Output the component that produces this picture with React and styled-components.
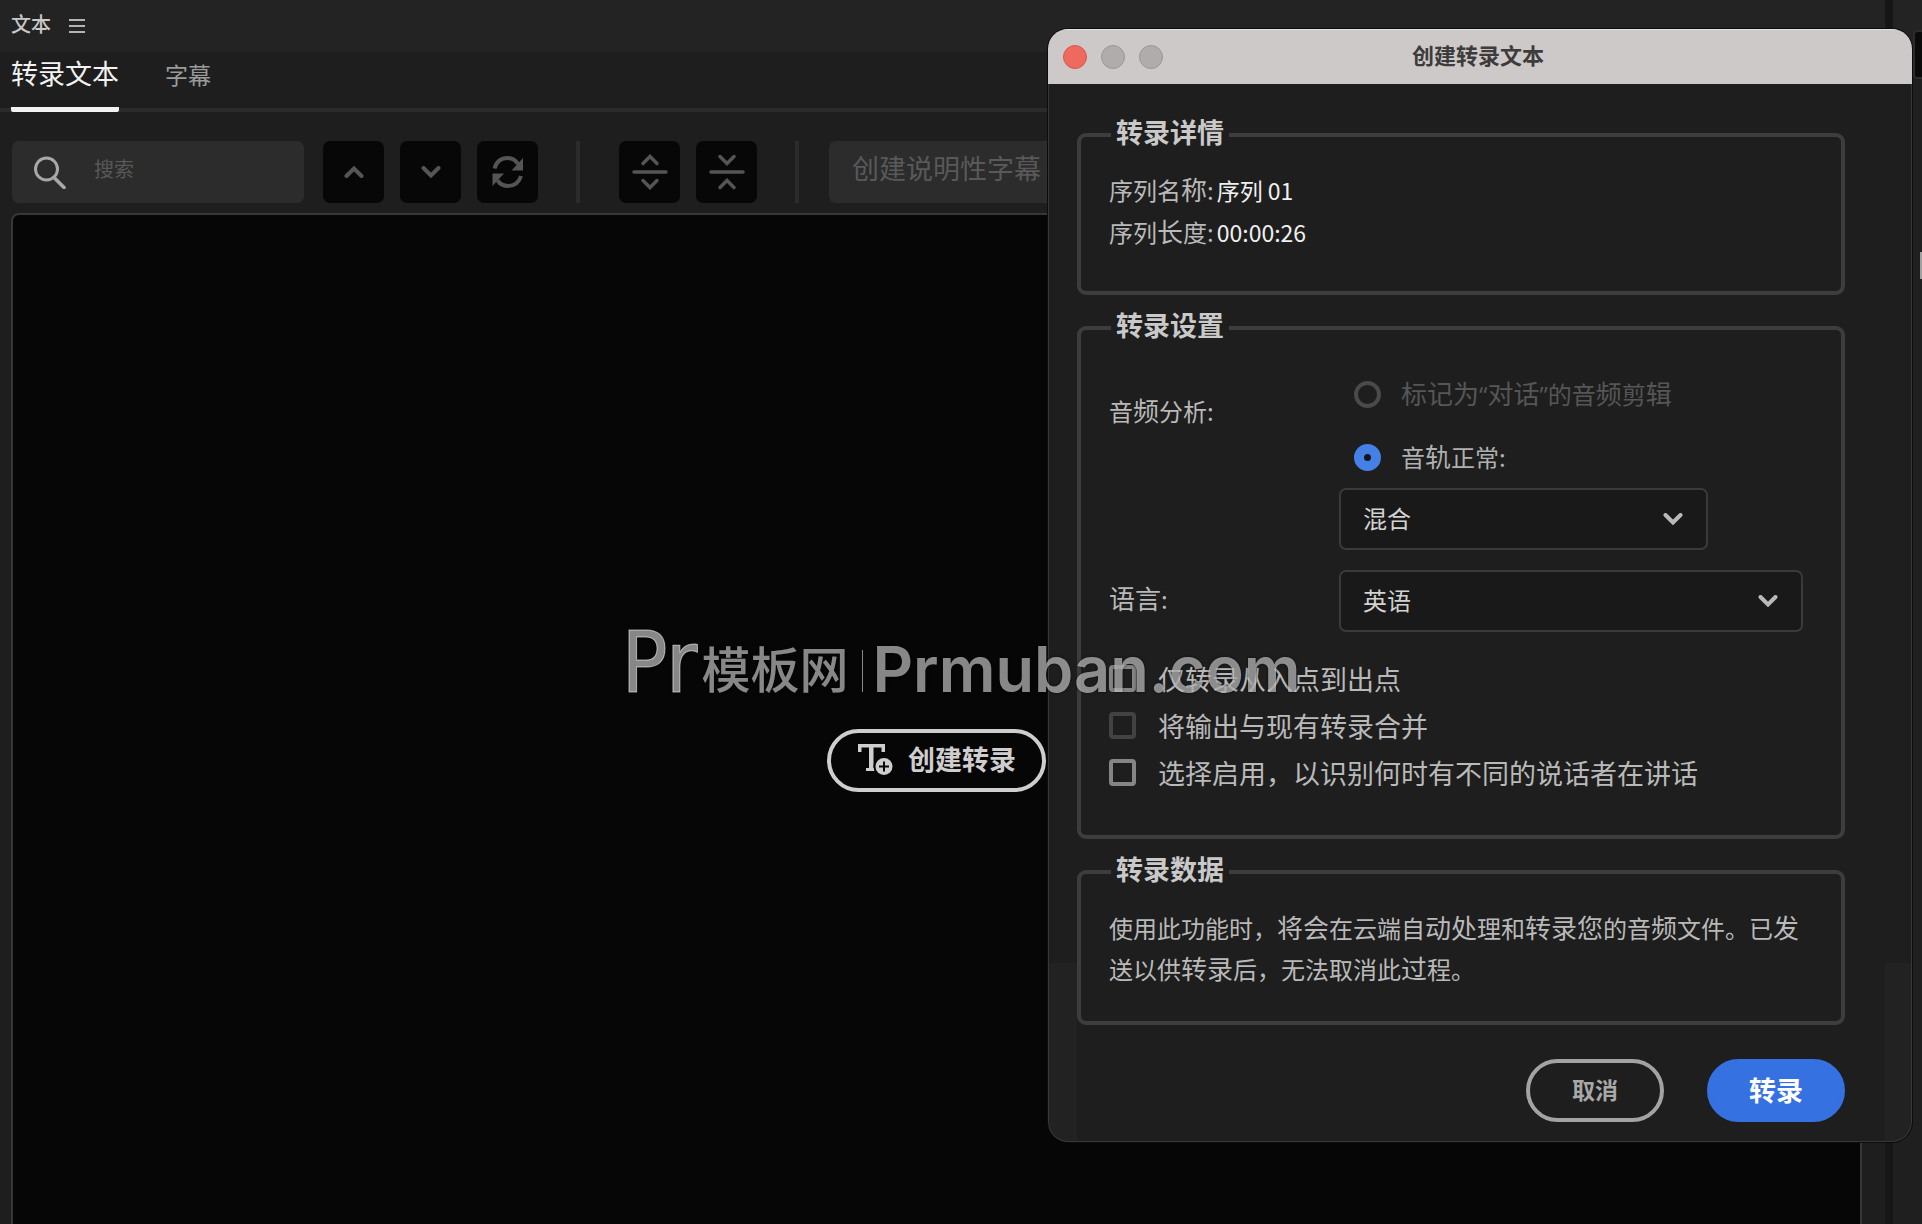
import React from 'react';
import styled, { createGlobalStyle } from 'styled-components';

const GlobalStyle = createGlobalStyle`
  * {
    box-sizing: border-box;
  }

  body {
    margin: 0;
    background: #1e1e1e;
    overflow: hidden;
    font-family: "Noto Sans CJK SC", sans-serif;
  }

  button, input, select {
    font-family: inherit;
    margin: 0;
  }
`;

const Workspace = styled.div`
  position: relative;
  min-height: 100vh;
  display: grid;
  grid-template-columns: 1fr 8px 29px;
`;

const TextPanel = styled.main`
  display: flex;
  flex-direction: column;
`;

const PanelHeader = styled.header`
  display: flex;
  align-items: center;
  gap: 18px;
  height: 52px;
  padding: 0 11px 4px;
  background: #232323;
`;

const PanelTitle = styled.h1`
  margin: 0;
  font-size: 20px;
  font-weight: 500;
  line-height: 28px;
  color: #c8c8c8;
`;

const MenuButton = styled.button`
  display: flex;
  padding: 4px 0 0;
  border: 0;
  background: none;
  color: #b4b4b4;
`;

const Tabs = styled.nav`
  display: flex;
  gap: 46px;
  height: 60px;
  padding: 0 11px;
  box-shadow: inset 0 -4px #2b2b2b;
`;

const Tab = styled.button`
  padding: 0 0 ${p => (p.$active ? 14 : 12)}px;
  border: 0;
  border-bottom: 5px solid ${p => (p.$active ? '#f2f2f2' : 'transparent')};
  border-radius: 2px;
  background: none;
  font-size: ${p => (p.$active ? 27 : 23)}px;
  line-height: 40px;
  color: ${p => (p.$active ? '#f2f2f2' : '#9a9a9a')};
`;

const Toolbar = styled.div`
  display: flex;
  height: 101px;
  padding: 29px 0 10px 12px;
  overflow: hidden;
`;

const SearchBox = styled.label`
  display: flex;
  align-items: center;
  gap: 28px;
  width: 292px;
  height: 62px;
  margin-right: 19px;
  padding: 0 22px;
  border-radius: 7px;
  background: #2c2c2c;
  color: #a8a8a8;
`;

const SearchInput = styled.input`
  flex: 1;
  min-width: 0;
  padding: 0 0 8px;
  border: 0;
  outline: 0;
  background: none;
  font-size: 20px;
  color: #ccc;

  &::placeholder {
    color: #585858;
    opacity: 1;
  }
`;

const ToolGroup = styled.div`
  display: flex;
  gap: 16px;
`;

const ToolButton = styled.button`
  display: flex;
  align-items: center;
  justify-content: center;
  width: 61px;
  height: 62px;
  padding: 0;
  border: 0;
  border-radius: 7px;
  background: #070707;
  color: #555;
`;

const Divider = styled.span`
  width: 4px;
  height: 62px;
  margin: 0 ${p => p.$after}px 0 38px;
  background: #2b2b2b;
`;

const CaptionButton = styled.button`
  height: 62px;
  padding: 0 23px 9px;
  border: 0;
  border-radius: 7px;
  background: #2c2c2c;
  font-size: 27px;
  color: #595959;
`;

const Canvas = styled.section`
  flex: 1;
  display: flex;
  align-items: center;
  justify-content: center;
  margin: 0 23px 0 11px;
  padding-top: 81px;
  border: 2px solid #373737;
  border-bottom: 0;
  border-radius: 8px 0 0 0;
  background: #060606;
`;

const PillButton = styled.button`
  display: flex;
  align-items: center;
  justify-content: center;
  gap: 15px;
  min-width: ${p => p.$width}px;
  height: 63px;
  padding: 0 0 3px;
  border: 4px solid ${p => p.$border};
  border-radius: 32px;
  background: ${p => p.$fill || 'transparent'};
  font-size: ${p => p.$size || 27}px;
  font-weight: 700;
  color: ${p => p.$color};
`;

const Gutter = styled.div`
  background: #161616;
`;

const SidePanel = styled.aside`
  padding-top: 30px;
  background: linear-gradient(#232323 52px, #1f1f1f 52px);
`;

const SideTab = styled.div`
  height: 49px;
  margin-left: 20px;
  border: 2px solid #2b2b2b;
  border-right: 0;
  border-radius: 4px 0 0 4px;
  background: #0a0a0a;
`;

const SideHandle = styled.div`
  width: 2px;
  height: 27px;
  margin: 173px 0 0 auto;
  background: #a0a0a0;
`;

const Dialog = styled.div`
  position: absolute;
  top: 29px;
  right: 10px;
  width: 864px;
  border-radius: 20px;
  overflow: hidden;
  background: #1e1e1e;
  box-shadow: 0 0 0 1px #0c0c0c;
`;

const TitleBar = styled.header`
  display: grid;
  grid-template-columns: 1fr auto 1fr;
  align-items: center;
  height: 55px;
  padding: 0 15px;
  border-top: 1px solid #e4e1e1;
  background: #cdc9c9;
`;

const Lights = styled.div`
  display: flex;
  gap: 14px;
`;

const Light = styled.button`
  width: 24px;
  height: 24px;
  padding: 0;
  border: 1px solid ${p => (p.$close ? '#d9584b' : '#9b9797')};
  border-radius: 50%;
  background: ${p => (p.$close ? '#ee6a5e' : '#b0acac')};
`;

const DialogTitle = styled.h2`
  margin: 0;
  padding: 0 4px 6px 0;
  font-size: 22px;
  font-weight: 700;
  line-height: 32px;
  color: #3d3b3b;
`;

const DialogBody = styled.form`
  display: flex;
  flex-direction: column;
  gap: 15px;
  padding: 33px 66px 19px 28px;
  border: 1px solid #383838;
  border-top: 0;
  border-radius: 0 0 20px 20px;
  background:
    linear-gradient(#222, #222) 0 100% / 28px 178px no-repeat,
    linear-gradient(#222, #222) 100% 100% / 26px 178px no-repeat,
    #1e1e1e;
`;

const Group = styled.fieldset`
  min-width: 0;
  margin: 0;
  padding: ${p => p.$top}px 38px ${p => p.$bottom}px 28px;
  border: 4px solid #3d3d3d;
  border-radius: 9px;
  font-size: 24px;
  line-height: 42px;
  color: #b9b9b9;
`;

const Legend = styled.legend`
  margin-left: 2px;
  padding: 0 5px 6px;
  font-size: 27px;
  font-weight: 700;
  line-height: 30px;
  color: #c9c9c9;
`;

const Large = styled.span`
  font-size: 26px;
  line-height: 1;
`;

const Quote = styled.span`
  font-family: "Open Sans", sans-serif;
  line-height: 1;
`;

const Details = styled.dl`
  display: grid;
  grid-template-columns: auto 1fr;
  column-gap: 3px;
  margin: 0;
`;

const Term = styled.dt`
  height: 42px;
`;

const Value = styled.dd`
  height: 42px;
  margin: 0;
  font-size: 23px;
  color: #f0f0f0;
`;

const Settings = styled.div`
  display: grid;
  grid-template-columns: 230px 1fr;
  row-gap: 20px;
`;

const SettingName = styled.div`
  height: 42px;
  margin-top: ${p => p.$top}px;
`;

const AudioOptions = styled.div`
  display: flex;
  flex-direction: column;
  gap: 21px;
  margin-bottom: 10px;
  padding-left: 15px;
`;

const OptionLabel = styled.label`
  display: flex;
  align-items: center;
  gap: 20px;
  height: 42px;
  color: ${p => (p.$dim ? '#565656' : '#b0b0b0')};
`;

const Radio = styled.input`
  appearance: none;
  width: 27px;
  height: 27px;
  border: 4px solid #4a4a4a;
  border-radius: 50%;

  &:checked {
    border: 10px solid #4480e6;
    background: #15161a;
  }
`;

const SelectWrap = styled.div`
  display: grid;
  align-items: center;
  width: ${p => p.$width};
  color: #b9b9b9;

  > * {
    grid-area: 1 / 1;
  }

  > svg {
    justify-self: end;
    margin-right: 25px;
    pointer-events: none;
  }
`;

const Select = styled.select`
  appearance: none;
  width: 100%;
  height: 62px;
  padding: 0 60px 3px 22px;
  border: 2px solid #3a3a3a;
  border-radius: 7px;
  background: #191919;
  font-size: 24px;
  color: #d2d2d2;
`;

const CheckList = styled.div`
  display: flex;
  flex-direction: column;
  margin-top: 23px;
`;

const CheckLabel = styled.label`
  display: flex;
  align-items: center;
  gap: 22px;
  height: 47px;
  font-size: 27px;
`;

const Checkbox = styled.input`
  appearance: none;
  width: 27px;
  height: 27px;
  border: 4px solid #858585;
  border-radius: 4px;

  &:disabled {
    border-color: #424242;
  }
`;

const Note = styled.p`
  margin: 0;
  line-height: 41px;
`;

const Actions = styled.div`
  display: flex;
  justify-content: flex-end;
  gap: 43px;
  margin-top: 19px;
`;

const Watermark = styled.div`
  position: absolute;
  top: 613px;
  left: 0;
  right: 0;
  text-align: center;
  line-height: 100px;
  white-space: nowrap;
  color: rgba(255, 255, 255, 0.53);
  text-shadow: 0 0 3px rgba(0, 0, 0, 0.6);
  pointer-events: none;
`;

const MarkLogo = styled.span`
  font-family: "Liberation Sans Narrow", "DejaVu Sans Condensed", sans-serif;
  font-size: 85px;
  font-weight: 400;
  -webkit-text-stroke: 1px rgba(255, 255, 255, 0.53);
`;

const MarkName = styled.span`
  margin-left: 4px;
  font-size: 49px;
  font-weight: 500;
  vertical-align: 4px;
`;

const MarkRule = styled.span`
  display: inline-block;
  width: 1px;
  height: 42px;
  margin: 0 9px 0 14px;
  background: rgba(255, 255, 255, 0.53);
`;

const MarkSite = styled.span`
  font-family: Inter, sans-serif;
  font-size: 63px;
  font-weight: 600;
`;

const Chevron = ({ up, size = 20, width = 4 }) => (
  <svg width={size} height={size * 0.6} viewBox="0 0 20 12" fill="none" stroke="currentColor" strokeWidth={width} strokeLinecap="round">
    <path d={up ? 'M2.5 10 10 2.5 17.5 10' : 'M2.5 2 10 9.5 17.5 2'} />
  </svg>
);

const MenuIcon = () => (
  <svg width="16" height="14" viewBox="0 0 16 14" fill="currentColor">
    <path d="M0 0h16v2H0zM0 6h16v2H0zM0 12h16v2H0z" />
  </svg>
);

const SearchIcon = () => (
  <svg width="32" height="33" viewBox="0 0 32 33" fill="none" stroke="currentColor" strokeWidth="3">
    <circle cx="12.5" cy="13" r="11" />
    <path d="M20 21.5 30 31.5" strokeWidth="3.6" strokeLinecap="round" />
  </svg>
);

const RefreshIcon = () => (
  <svg width="32" height="34" viewBox="0 0 32 34" fill="none" stroke="currentColor" strokeWidth="4">
    <path d="M2.5 13.5C4.5 6.5 9.5 3 15.5 3c4.5 0 8 2 10.5 6" />
    <path d="M31 3v12.5H19.5z" fill="currentColor" stroke="none" />
    <path d="M29 21c-2 6.5-7 10-13 10-4.5 0-8-2-10.5-5.5" />
    <path d="M.5 31V18.5H12z" fill="currentColor" stroke="none" />
  </svg>
);

const ExpandIcon = () => (
  <svg width="36" height="36" viewBox="0 0 36 36" fill="none" stroke="currentColor" strokeWidth="3.5" strokeLinecap="round">
    <path d="M11 9.5 18 2.5 25 9.5M2 18h32M11 26.5 18 33.5 25 26.5" />
  </svg>
);

const CollapseIcon = () => (
  <svg width="36" height="36" viewBox="0 0 36 36" fill="none" stroke="currentColor" strokeWidth="3.5" strokeLinecap="round">
    <path d="M11 2.5 18 9.5 25 2.5M2 18h32M11 33.5 18 26.5 25 33.5" />
  </svg>
);

const TextAddIcon = () => (
  <svg width="36" height="35" viewBox="0 0 36 35" fill="none">
    <path d="M1 3h27v8h-3.5V6.5h-8V27H19v3H9v-3h3V6.5H4.5V11H1z" fill="currentColor" />
    <circle cx="27" cy="25.5" r="10.5" fill="#060606" />
    <circle cx="27" cy="25.5" r="8.5" fill="currentColor" />
    <path d="M27 20.5v10M22 25.5h10" stroke="#060606" strokeWidth="2" />
  </svg>
);

// these characters are set larger than the rest of the running text
const LARGE = /([称长频标记为对话辑轨语言将会动处转录您发过]+)/;

const Mixed = ({ children }) =>
  children.split(LARGE).map((part, i) => (i % 2 ? <Large key={i}>{part}</Large> : part));

const checks = [
  { id: 'inout', text: '仅转录从入点到出点' },
  { id: 'merge', text: '将输出与现有转录合并', disabled: true },
  { id: 'speakers', text: '选择启用，以识别何时有不同的说话者在讲话' },
];

const TranscribeDialog = () => (
  <Dialog role="dialog" aria-labelledby="dialog-title">
    <TitleBar>
      <Lights>
        <Light $close aria-label="关闭" />
        <Light aria-label="最小化" />
        <Light aria-label="缩放" />
      </Lights>
      <DialogTitle id="dialog-title">创建转录文本</DialogTitle>
    </TitleBar>
    <DialogBody onSubmit={e => e.preventDefault()}>
      <Group $top={16} $bottom={38}>
        <Legend>转录详情</Legend>
        <Details>
          <Term><Mixed>序列名称:</Mixed></Term>
          <Value>序列 01</Value>
          <Term><Mixed>序列长度:</Mixed></Term>
          <Value>00:00:26</Value>
        </Details>
      </Group>

      <Group $top={27} $bottom={39}>
        <Legend>转录设置</Legend>
        <Settings>
          <SettingName $top={17}><Mixed>音频分析:</Mixed></SettingName>
          <div>
            <AudioOptions>
              <OptionLabel $dim>
                <Radio type="radio" name="audio" disabled />
                <span>
                  <Mixed>标记为</Mixed>
                  <Quote>“</Quote>
                  <Mixed>对话</Mixed>
                  <Quote>”</Quote>
                  <Mixed>的音频剪辑</Mixed>
                </span>
              </OptionLabel>
              <OptionLabel>
                <Radio type="radio" name="audio" defaultChecked />
                <span><Mixed>音轨正常:</Mixed></span>
              </OptionLabel>
            </AudioOptions>
            <SelectWrap $width="369px">
              <Select aria-label="音轨正常">
                <option>混合</option>
              </Select>
              <Chevron />
            </SelectWrap>
          </div>
          <SettingName $top={8}>
            <label htmlFor="language"><Mixed>语言:</Mixed></label>
          </SettingName>
          <SelectWrap $width="100%">
            <Select id="language">
              <option>英语</option>
            </Select>
            <Chevron />
          </SelectWrap>
        </Settings>
        <CheckList>
          {checks.map(c => (
            <CheckLabel key={c.id}>
              <Checkbox type="checkbox" name={c.id} disabled={c.disabled} />
              {c.text}
            </CheckLabel>
          ))}
        </CheckList>
      </Group>

      <Group $top={17} $bottom={32}>
        <Legend>转录数据</Legend>
        <Note>
          <Mixed>使用此功能时，将会在云端自动处理和转录您的音频文件。已发送以供转录后，无法取消此过程。</Mixed>
        </Note>
      </Group>

      <Actions>
        <PillButton type="button" $width={138} $size={23} $border="#a3a3a3" $color="#a8a8a8">取消</PillButton>
        <PillButton type="submit" $width={138} $border="#3571e0" $fill="#3571e0" $color="#fff">转录</PillButton>
      </Actions>
    </DialogBody>
  </Dialog>
);

const App = () => (
  <>
    <GlobalStyle />
    <Workspace>
      <TextPanel>
        <PanelHeader>
          <PanelTitle>文本</PanelTitle>
          <MenuButton aria-label="面板菜单"><MenuIcon /></MenuButton>
        </PanelHeader>
        <Tabs>
          <Tab $active>转录文本</Tab>
          <Tab>字幕</Tab>
        </Tabs>
        <Toolbar>
          <SearchBox>
            <SearchIcon />
            <SearchInput type="text" placeholder="搜索" aria-label="搜索" />
          </SearchBox>
          <ToolGroup>
            <ToolButton aria-label="上一个"><Chevron up /></ToolButton>
            <ToolButton aria-label="下一个"><Chevron /></ToolButton>
            <ToolButton aria-label="替换"><RefreshIcon /></ToolButton>
          </ToolGroup>
          <Divider $after={39} />
          <ToolGroup>
            <ToolButton aria-label="拆分"><ExpandIcon /></ToolButton>
            <ToolButton aria-label="合并"><CollapseIcon /></ToolButton>
          </ToolGroup>
          <Divider $after={30} />
          <CaptionButton>创建说明性字幕</CaptionButton>
        </Toolbar>
        <Canvas>
          <PillButton $width={219} $border="#cfcdcd" $color="#cfcdcd">
            <TextAddIcon />
            创建转录
          </PillButton>
        </Canvas>
      </TextPanel>
      <Gutter />
      <SidePanel>
        <SideTab />
        <SideHandle />
      </SidePanel>
      <TranscribeDialog />
      <Watermark>
        <MarkLogo>Pr</MarkLogo>
        <MarkName>模板网</MarkName>
        <MarkRule />
        <MarkSite>Prmuban.com</MarkSite>
      </Watermark>
    </Workspace>
  </>
);

export default App;
